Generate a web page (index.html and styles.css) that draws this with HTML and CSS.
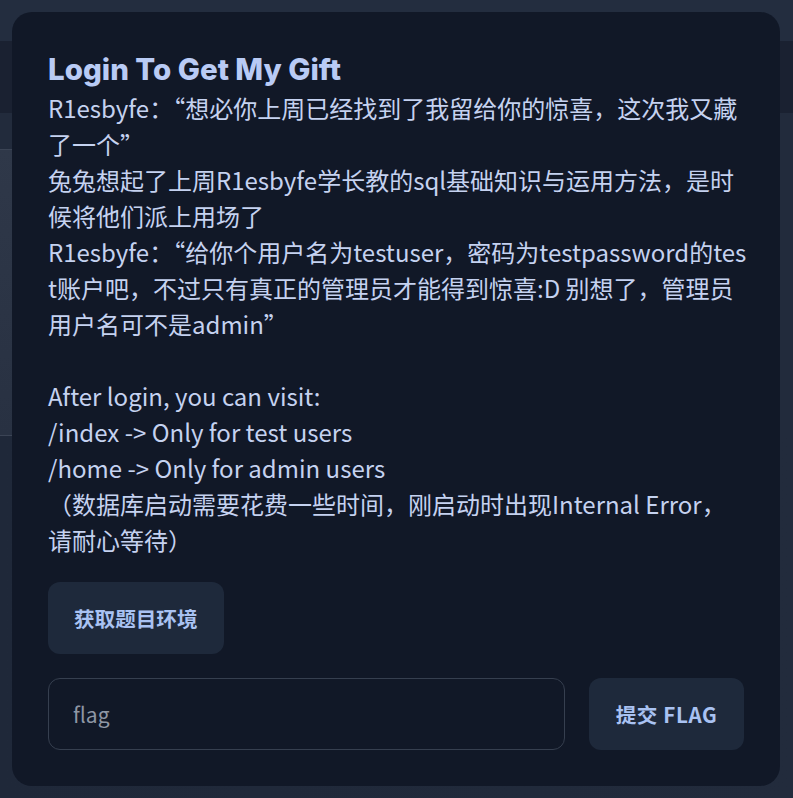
FILE: index.html
```html
<!DOCTYPE html>
<html lang="zh-CN">
<head>
<meta charset="utf-8">
<title>Login To Get My Gift</title>
<link rel="stylesheet" href="styles.css">
</head>
<body>
<div class="page">
  <div class="topbar"></div>
  <div class="nav"></div>
  <div class="strip"></div>
  <div class="panel"></div>
  <div class="rest"></div>
</div>
<div class="overlay">
  <div class="card">
    <h1 class="title">Login To Get My Gift</h1>
    <p class="desc">R1esbyfe：“想必你上周已经找到了我留给你的惊喜，这次我又藏<br>了一个”<br>兔兔想起了上周R1esbyfe学长教的sql基础知识与运用方法，是时<br>候将他们派上用场了<br>R1esbyfe：“给你个用户名为testuser，密码为testpassword的tes<br>t账户吧，不过只有真正的管理员才能得到惊喜:D 别想了，管理员<br>用户名可不是admin”<br><br>After login, you can visit:<br>/index -&gt; Only for test users<br>/home -&gt; Only for admin users<br>（数据库启动需要花费一些时间，刚启动时出现Internal Error，<br>请耐心等待）</p>
    <button class="btn env">获取题目环境</button>
    <div class="flag-row">
      <input class="flag-input" type="text" placeholder="flag">
      <button class="btn submit">提交 FLAG</button>
    </div>
  </div>
</div>
</body>
</html>
```
FILE: styles.css
```css
html, body {
  margin: 0;
  padding: 0;
}
body {
  background: #222b3c;
  width: 793px;
  height: 798px;
  overflow: hidden;
  font-family: "Noto Sans CJK SC", "Noto Sans", sans-serif;
}
.page {
  display: flex;
  flex-direction: column;
  height: 798px;
}
.topbar {
  height: 41px;
  background: #232d3f;
}
.nav {
  height: 72px;
  background: #1a2131;
}
.strip {
  height: 36px;
  background: #222b3c;
}
.panel {
  height: 285px;
  width: 60%;
  border-top: 1px solid #3b4455;
  border-bottom: 1px solid #3b4455;
  background: linear-gradient(180deg, #2f3849 0%, #283142 100%);
}
.rest {
  flex: 1;
  background: linear-gradient(90deg, #1f2839 0%, #222b3c 100%);
}
.overlay {
  position: absolute;
  top: 0;
  left: 0;
  padding: 12px;
}
.card {
  box-sizing: border-box;
  width: 768px;
  height: 774px;
  background: #111827;
  border-radius: 20px;
  padding: 36px;
  display: flex;
  flex-direction: column;
}
.title {
  margin: 0;
  font-family: Inter, "Noto Sans", sans-serif;
  font-weight: 800;
  font-size: 29.5px;
  line-height: 42px;
  color: #b9cbf5;
}
.desc {
  margin: 0 -12px 0 0;
  font-size: 24px;
  line-height: 36px;
  color: #c5d2f0;
  white-space: nowrap;
}
.btn {
  border: none;
  background: #1e293b;
  border-radius: 12px;
  height: 72px;
  padding: 0 26px;
  font-family: "Noto Sans CJK SC", "Noto Sans", sans-serif;
  font-weight: 700;
  font-size: 20.6px;
  color: #a9c2f2;
}
.env {
  align-self: flex-start;
  margin-top: 24px;
}
.flag-row {
  display: flex;
  gap: 24px;
  margin-top: 24px;
}
.flag-input {
  flex: 1;
  box-sizing: border-box;
  height: 72px;
  border: 1px solid #363f4f;
  border-radius: 12px;
  background: #111827;
  padding: 0 24px;
  font-family: "Noto Sans CJK SC", "Noto Sans", sans-serif;
  font-size: 21px;
  color: #c5d2f0;
  outline: none;
}
.flag-input::placeholder {
  color: #8e96a4;
}
.submit {
  flex: none;
  width: 155px;
  padding: 0;
  letter-spacing: 0.6px;
}
```
